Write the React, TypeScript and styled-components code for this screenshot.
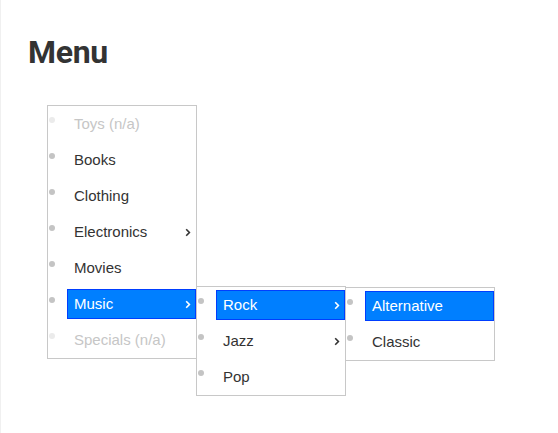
import React from 'react';
import styled, { createGlobalStyle } from 'styled-components';

type Item = { label: string; disabled?: boolean; active?: boolean; children?: Item[] };

const menu: Item[] = [
  { label: 'Toys (n/a)', disabled: true },
  { label: 'Books' },
  { label: 'Clothing' },
  { label: 'Electronics', children: [] },
  { label: 'Movies' },
  {
    label: 'Music',
    active: true,
    children: [
      {
        label: 'Rock',
        active: true,
        children: [{ label: 'Alternative', active: true }, { label: 'Classic' }],
      },
      { label: 'Jazz', children: [] },
      { label: 'Pop' },
    ],
  },
  { label: 'Specials (n/a)', disabled: true },
];

const GlobalStyle = createGlobalStyle`
  html, body {
    margin: 0;
    padding: 0;
    background: #ffffff;
  }
  body {
    font-family: "Liberation Sans", Arial, sans-serif;
  }
`;

const Page = styled.div`
  min-height: 433px;
  box-sizing: border-box;
  border-left: 1px solid #f0f0f0;
  padding: 32px 0 0 27px;
`;

const Heading = styled.h1`
  margin: 0 0 33px;
  font-family: Roboto, "Liberation Sans", sans-serif;
  font-weight: 700;
  font-size: 32px;
  line-height: 40px;
  color: #333333;
  letter-spacing: -0.3px;
`;

const MenuWrap = styled.div`
  padding-left: 19px;
`;

const List = styled.ul<{ $sub?: boolean }>`
  list-style: none;
  margin: 0;
  padding: 0;
  width: 148px;
  border: 1px solid #c8c8c8;
  background: #ffffff;
  ${(p) =>
    p.$sub &&
    `
    position: absolute;
    top: 0;
    left: 100%;
    z-index: 2;
  `}
`;

const Row = styled.li<{ $disabled?: boolean }>`
  position: relative;
  height: 36px;
  box-sizing: border-box;
  padding: 3px 0 3px 19px;

  &::before {
    content: '';
    position: absolute;
    left: 1px;
    top: 11px;
    width: 6px;
    height: 6px;
    border-radius: 50%;
    background: ${(p) => (p.$disabled ? '#ebebeb' : '#c4c4c4')};
  }
`;

const Link = styled.a<{ $active?: boolean; $disabled?: boolean }>`
  position: relative;
  display: block;
  height: 30px;
  box-sizing: border-box;
  padding: 0 0 0 6px;
  font-size: 15px;
  line-height: 28px;
  text-decoration: none;
  cursor: default;
  border: 1px solid ${(p) => (p.$active ? '#003eff' : 'transparent')};
  background: ${(p) => (p.$active ? '#007fff' : 'transparent')};
  color: ${(p) => (p.$active ? '#ffffff' : p.$disabled ? '#c6c6c6' : '#333333')};
`;

const Caret = styled.svg`
  position: absolute;
  right: 4px;
  top: 10px;
`;

const MenuList: React.FC<{ items: Item[]; sub?: boolean }> = ({ items, sub }) => (
  <List $sub={sub}>
    {items.map((item) => (
      <Row key={item.label} $disabled={item.disabled}>
        <Link $active={item.active} $disabled={item.disabled}>
          {item.label}
          {item.children && (
            <Caret width="6" height="9" viewBox="0 0 6 9">
              <path d="M1.2 1.2 L4.4 4.5 L1.2 7.8" fill="none" stroke="currentColor" strokeWidth="1.6" />
            </Caret>
          )}
        </Link>
        {item.children && item.children.length > 0 && item.active && (
          <MenuList items={item.children} sub />
        )}
      </Row>
    ))}
  </List>
);

export default function App() {
  return (
    <>
      <GlobalStyle />
      <Page>
        <Heading>Menu</Heading>
        <MenuWrap>
          <MenuList items={menu} />
        </MenuWrap>
      </Page>
    </>
  );
}
